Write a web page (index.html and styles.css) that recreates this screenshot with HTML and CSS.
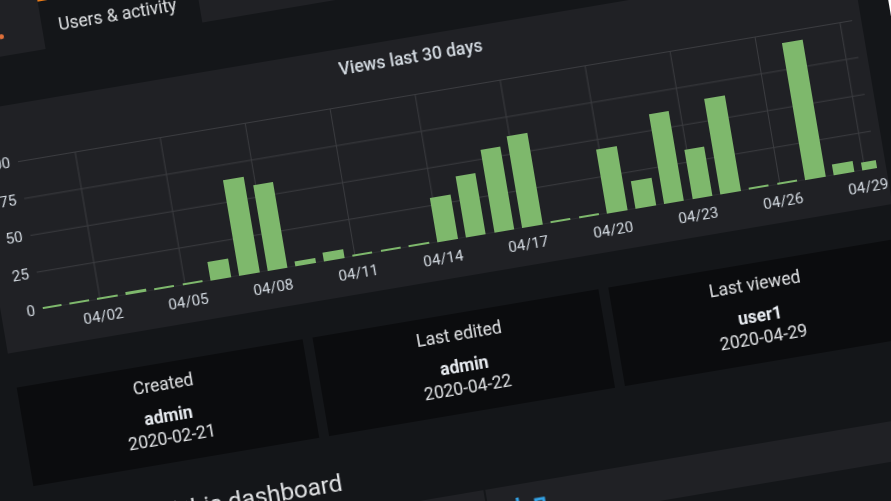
FILE: index.html
```html
<!DOCTYPE html>
<html>

<head>
  <meta charset="utf-8">
  <title>Dashboard insights</title>
  <link rel="stylesheet" href="styles.css">
</head>

<body>
  <div class="stage">
    <div class="tabs">
      <div class="tab">
        <span class="tab_dot"></span>
      </div>
      <div class="tab tab_active">Users &amp; activity</div>
    </div>

    <div class="panel">
      <div class="panel_title">Views last 30 days</div>
      <div class="chart">
        <div class="y_axis">
          <span>100</span>
          <span>75</span>
          <span>50</span>
          <span>25</span>
          <span>0</span>
        </div>
        <div class="plot_col">
          <div class="plot">
            <div class="bar" style="height:2px"></div>
            <div class="bar" style="height:2px"></div>
            <div class="bar" style="height:2px"></div>
            <div class="bar" style="height:3px"></div>
            <div class="bar" style="height:2px"></div>
            <div class="bar" style="height:2px"></div>
            <div class="bar" style="height:18.5px"></div>
            <div class="bar" style="height:97px"></div>
            <div class="bar" style="height:87px"></div>
            <div class="bar" style="height:4.5px"></div>
            <div class="bar" style="height:8.5px"></div>
            <div class="bar" style="height:2px"></div>
            <div class="bar" style="height:2px"></div>
            <div class="bar" style="height:2px"></div>
            <div class="bar" style="height:45px"></div>
            <div class="bar" style="height:61.5px"></div>
            <div class="bar" style="height:84px"></div>
            <div class="bar" style="height:93px"></div>
            <div class="bar" style="height:2px"></div>
            <div class="bar" style="height:2px"></div>
            <div class="bar" style="height:65px"></div>
            <div class="bar" style="height:28px"></div>
            <div class="bar" style="height:91px"></div>
            <div class="bar" style="height:49.7px"></div>
            <div class="bar" style="height:96.5px"></div>
            <div class="bar" style="height:2px"></div>
            <div class="bar" style="height:2px"></div>
            <div class="bar" style="height:139px"></div>
            <div class="bar" style="height:11px"></div>
            <div class="bar" style="height:8px"></div>
          </div>
          <div class="x_axis">
            <span>04/02</span>
            <span>04/05</span>
            <span>04/08</span>
            <span>04/11</span>
            <span>04/14</span>
            <span>04/17</span>
            <span>04/20</span>
            <span>04/23</span>
            <span>04/26</span>
            <span>04/29</span>
          </div>
        </div>
      </div>
    </div>

    <div class="cards">
      <div class="card">
        <div class="card_label">Created</div>
        <div class="card_name">admin</div>
        <div class="card_date">2020-02-21</div>
      </div>
      <div class="card">
        <div class="card_label">Last edited</div>
        <div class="card_name">admin</div>
        <div class="card_date">2020-04-22</div>
      </div>
      <div class="card">
        <div class="card_label">Last viewed</div>
        <div class="card_name">user1</div>
        <div class="card_date">2020-04-29</div>
      </div>
    </div>

    <h2 class="heading">Top users of this dashboard</h2>

    <div class="table_head">
      <div class="table_cell"></div>
      <div class="table_cell table_sorted">
        <svg width="32" height="16" viewBox="0 0 32 16">
          <path d="M2 0V16M20 5H28V16H20Z" stroke="#33a2e5" stroke-width="3" fill="none" />
        </svg>
      </div>
    </div>
  </div>
</body>

</html>
```

FILE: styles.css
```css
html,
body {
  margin: 0;
  height: 100%;
  overflow: hidden;
  background-color: #fff;
}

/* the whole screenshot is tilted, everything inside is normal flow */
.stage {
  box-sizing: border-box;
  width: 987px;
  height: 680px;
  padding-left: 60px;
  background-color: #141619;
  color: #e0e2e4;
  font-family: Roboto, "Liberation Sans", sans-serif;
  font-size: 17.5px;
  transform-origin: 60px 120px;
  transform: translate(-93px, -8px) rotate(-9.6deg);
  filter: blur(0.35px);
}

.tabs {
  display: flex;
  width: 897px;
  height: 71px;
  margin-bottom: 49px;
  background-color: #202125;
}

.tab {
  display: flex;
  align-items: center;
  justify-content: flex-end;
  box-sizing: border-box;
  width: 87.5px;
  padding: 32px 39px 0 0;
}

.tab_dot {
  width: 5px;
  height: 5px;
  border-radius: 50%;
  background-color: #e0703a;
}

.tab_active {
  justify-content: center;
  width: 159px;
  margin-top: 20px;
  padding: 3px 5px 0 0;
  border-top: 3px solid #eb7b18;
  background-color: #141619;
}

.panel {
  box-sizing: border-box;
  width: 897px;
  height: 245px;
  padding-top: 10px;
  background-color: #202125;
}

.panel_title {
  height: 20px;
  margin-bottom: 17px;
  padding-right: 4px;
  color: #d4dbe2;
  font-weight: 500;
  line-height: 20px;
  text-align: center;
}

.chart {
  display: flex;
  font-size: 15.2px;
  color: #d4dbe2;
}

.y_axis {
  display: flex;
  flex-direction: column;
  justify-content: space-between;
  box-sizing: border-box;
  width: 34px;
  height: 170px;
  margin-right: 8px;
  line-height: 20px;
  text-align: right;
}

.plot_col {
  width: 846px;
  padding-top: 10px;
}

.plot {
  display: flex;
  align-items: flex-end;
  gap: 8.23px;
  height: 149.5px;
  overflow: hidden;
  background-image:
    linear-gradient(#3b3c40 1px, transparent 1px),
    linear-gradient(90deg, #3b3c40 1px, transparent 1px);
  background-size: 100% 37.4px, 86.2px 100%;
  background-position: 0 0, 57.5px 0;
}

.bar {
  flex: none;
  width: 20.5px;
  background-color: #7eb86c;
}

.bar:first-child {
  margin-left: -2px;
}

.x_axis {
  display: flex;
  padding: 7px 0 0 15.5px;
  line-height: 20px;
}

.x_axis span {
  flex: none;
  width: 86.2px;
  text-align: center;
}

.cards {
  display: flex;
  gap: 10px;
  margin: 35px 0 0 3px;
}

.card {
  box-sizing: border-box;
  width: 290px;
  height: 100px;
  padding-top: 9.5px;
  background-color: #0b0c0e;
  line-height: 22px;
  text-align: center;
}

.card_label {
  margin-bottom: 10px;
}

.card_name {
  color: #e9edf2;
  font-weight: 700;
}

.heading {
  margin: 32.5px 0 16.5px 6px;
  color: #e0e2e4;
  font-size: 24.3px;
  font-weight: 400;
  line-height: 30px;
}

.table_head {
  display: flex;
  width: 897px;
  height: 40px;
  background-color: #202125;
}

.table_cell {
  flex: none;
  box-sizing: border-box;
  width: 446px;
}

.table_sorted {
  width: 451px;
  padding: 13px 0 0 28px;
  border-left: 2px solid #141619;
}

.table_sorted svg {
  display: block;
}
```
